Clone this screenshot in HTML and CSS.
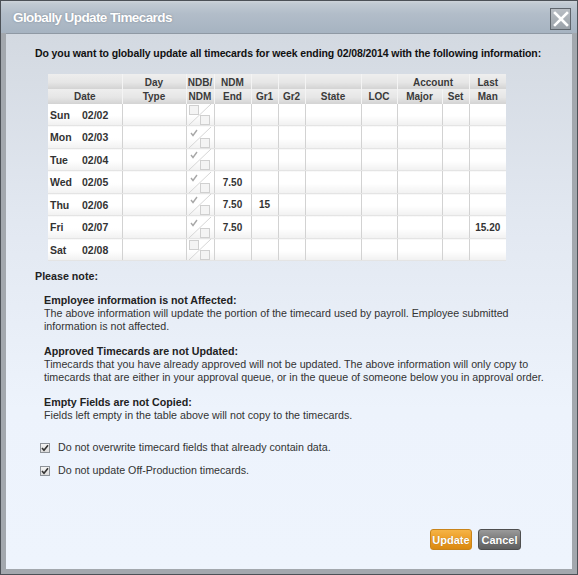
FILE: index.html
```html
<!DOCTYPE html>
<html>
<head>
<meta charset="utf-8">
<link rel="stylesheet" href="styles.css">
</head>
<body>
<div class="dialog">
  <div class="titlebar">
    <span class="title">Globally Update Timecards</span>
    <button class="close" aria-label="Close">
      <svg width="18" height="18" viewBox="0 0 18 18"><path d="M3 3 L15 15 M15 3 L3 15" stroke="#fff" stroke-width="2.6" stroke-linecap="square"/></svg>
    </button>
  </div>
  <div class="body">
    <p class="question">Do you want to globally update all timecards for week ending 02/08/2014 with the following information:</p>
    <table class="grid">
      <colgroup>
        <col class="c-date"><col class="c-type"><col class="c-ndb"><col class="c-end"><col class="c-gr"><col class="c-gr"><col class="c-state"><col class="c-loc"><col class="c-major"><col class="c-set"><col class="c-man">
      </colgroup>
      <thead>
        <tr class="h1">
          <th></th><th>Day</th><th>NDB/</th><th>NDM</th><th></th><th></th><th></th><th></th><th colspan="2" class="acct">Account</th><th>Last</th>
        </tr>
        <tr class="h2">
          <th>Date</th><th>Type</th><th>NDM</th><th>End</th><th>Gr1</th><th>Gr2</th><th>State</th><th>LOC</th><th>Major</th><th>Set</th><th>Man</th>
        </tr>
      </thead>
      <tbody>
        <tr><td class="date"><span class="dow">Sun</span><span>02/02</span></td><td></td><td class="ndb"><svg class="dual" width="28" height="21" viewBox="0 0 28 21"><line x1="2" y1="21" x2="24" y2="0" stroke="#d6d6d6"/><rect x="2.5" y="1.5" width="9" height="9" fill="#f4f4f4" stroke="#d0d0d0"/><rect x="13.5" y="11.5" width="9" height="9" fill="#f4f4f4" stroke="#d0d0d0"/></svg></td><td></td><td></td><td></td><td></td><td></td><td></td><td></td><td></td></tr>
        <tr><td class="date"><span class="dow">Mon</span><span>02/03</span></td><td></td><td class="ndb"><svg class="dual" width="28" height="21" viewBox="0 0 28 21"><line x1="2" y1="21" x2="24" y2="0" stroke="#d6d6d6"/><path d="M4 6 L6 8.5 L10 3" fill="none" stroke="#a8a8a8" stroke-width="1.4"/><rect x="13.5" y="11.5" width="9" height="9" fill="#f4f4f4" stroke="#d0d0d0"/></svg></td><td></td><td></td><td></td><td></td><td></td><td></td><td></td><td></td></tr>
        <tr><td class="date"><span class="dow">Tue</span><span>02/04</span></td><td></td><td class="ndb"><svg class="dual" width="28" height="21" viewBox="0 0 28 21"><line x1="2" y1="21" x2="24" y2="0" stroke="#d6d6d6"/><path d="M4 6 L6 8.5 L10 3" fill="none" stroke="#a8a8a8" stroke-width="1.4"/><rect x="13.5" y="11.5" width="9" height="9" fill="#f4f4f4" stroke="#d0d0d0"/></svg></td><td></td><td></td><td></td><td></td><td></td><td></td><td></td><td></td></tr>
        <tr><td class="date"><span class="dow">Wed</span><span>02/05</span></td><td></td><td class="ndb"><svg class="dual" width="28" height="21" viewBox="0 0 28 21"><line x1="2" y1="21" x2="24" y2="0" stroke="#d6d6d6"/><path d="M4 6 L6 8.5 L10 3" fill="none" stroke="#a8a8a8" stroke-width="1.4"/><rect x="13.5" y="11.5" width="9" height="9" fill="#f4f4f4" stroke="#d0d0d0"/></svg></td><td class="num">7.50</td><td></td><td></td><td></td><td></td><td></td><td></td><td></td></tr>
        <tr><td class="date"><span class="dow">Thu</span><span>02/06</span></td><td></td><td class="ndb"><svg class="dual" width="28" height="21" viewBox="0 0 28 21"><line x1="2" y1="21" x2="24" y2="0" stroke="#d6d6d6"/><path d="M4 6 L6 8.5 L10 3" fill="none" stroke="#a8a8a8" stroke-width="1.4"/><rect x="13.5" y="11.5" width="9" height="9" fill="#f4f4f4" stroke="#d0d0d0"/></svg></td><td class="num">7.50</td><td class="num">15</td><td></td><td></td><td></td><td></td><td></td><td></td></tr>
        <tr><td class="date"><span class="dow">Fri</span><span>02/07</span></td><td></td><td class="ndb"><svg class="dual" width="28" height="21" viewBox="0 0 28 21"><line x1="2" y1="21" x2="24" y2="0" stroke="#d6d6d6"/><path d="M4 6 L6 8.5 L10 3" fill="none" stroke="#a8a8a8" stroke-width="1.4"/><rect x="13.5" y="11.5" width="9" height="9" fill="#f4f4f4" stroke="#d0d0d0"/></svg></td><td class="num">7.50</td><td></td><td></td><td></td><td></td><td></td><td></td><td class="num">15.20</td></tr>
        <tr><td class="date"><span class="dow">Sat</span><span>02/08</span></td><td></td><td class="ndb"><svg class="dual" width="28" height="21" viewBox="0 0 28 21"><line x1="2" y1="21" x2="24" y2="0" stroke="#d6d6d6"/><rect x="2.5" y="1.5" width="9" height="9" fill="#f4f4f4" stroke="#d0d0d0"/><rect x="13.5" y="11.5" width="9" height="9" fill="#f4f4f4" stroke="#d0d0d0"/></svg></td><td></td><td></td><td></td><td></td><td></td><td></td><td></td><td></td></tr>
      </tbody>
    </table>

    <p class="note-title">Please note:</p>
    <div class="notes">
      <div class="note">
        <p class="note-head">Employee information is not Affected:</p>
        <p>The above information will update the portion of the timecard used by payroll. Employee submitted information is not affected.</p>
      </div>
      <div class="note">
        <p class="note-head">Approved Timecards are not Updated:</p>
        <p>Timecards that you have already approved will not be updated. The above information will only copy to timecards that are either in your approval queue, or in the queue of someone below you in approval order.</p>
      </div>
      <div class="note">
        <p class="note-head">Empty Fields are not Copied:</p>
        <p>Fields left empty in the table above will not copy to the timecards.</p>
      </div>
    </div>

    <div class="options">
      <label class="opt"><span class="cb"><svg width="8" height="8" viewBox="0 0 8 8"><path d="M1 4 L3 6.3 L7 1.2" fill="none" stroke="#333" stroke-width="1.6"/></svg></span>Do not overwrite timecard fields that already contain data.</label>
      <label class="opt"><span class="cb"><svg width="8" height="8" viewBox="0 0 8 8"><path d="M1 4 L3 6.3 L7 1.2" fill="none" stroke="#333" stroke-width="1.6"/></svg></span>Do not update Off-Production timecards.</label>
    </div>

    <div class="actions">
      <button class="btn btn-update">Update</button>
      <button class="btn btn-cancel">Cancel</button>
    </div>
  </div>
</div>
</body>
</html>
```

FILE: styles.css
```css
html, body {
  margin: 0;
  padding: 0;
}
body {
  width: 578px;
  height: 575px;
  overflow: hidden;
  font-family: "Liberation Sans", Arial, sans-serif;
  color: #222;
  background: #8e949a;
}
.dialog {
  box-sizing: border-box;
  width: 578px;
  height: 575px;
  display: flex;
  flex-direction: column;
  border: 1px solid #4c5157;
  background: #a3a8ae;
  padding: 0 5px 5px 5px;
}
.titlebar {
  height: 32px;
  margin: 0 -5px;
  padding: 0 6px 0 12px;
  display: flex;
  align-items: center;
  justify-content: space-between;
  background: linear-gradient(#cdd3d9 0, #c0c9d2 3px, #b2bdc9 40%, #a6b3c1 100%);
}
.title {
  color: #fff;
  font-weight: bold;
  font-size: 13.5px;
  letter-spacing: -0.6px;
  text-shadow: 0 0 2px rgba(80, 90, 100, 0.5);
  margin-top: 1px;
}
.close {
  width: 21px;
  height: 22px;
  padding: 0;
  margin-top: 4px;
  border: 1px solid #5f656c;
  background: linear-gradient(#b9bec4, #9aa1a8);
  display: flex;
  align-items: center;
  justify-content: center;
}
.body {
  flex: 1;
  display: flex;
  flex-direction: column;
  background: linear-gradient(#d3d9e1 0%, #e2e8f1 35%, #edf3fc 70%, #eef4fd 100%);
  border-top: 1px solid #8f99a4;
  padding: 0 0 0 29px;
  font-size: 10.7px;
}
.question {
  margin: 13px 0 0 0;
  font-weight: bold;
  font-size: 10.5px;
  letter-spacing: -0.1px;
  line-height: 13px;
  color: #111;
}
.grid {
  margin: 14px 0 0 13px;
  width: 458px;
  border-collapse: collapse;
  table-layout: fixed;
  font-size: 10px;
  font-weight: bold;
  color: #333;
}
.c-date { width: 74px; }
.c-type { width: 64px; }
.c-ndb { width: 28px; }
.c-end { width: 37px; }
.c-gr { width: 27px; }
.c-state { width: 56px; }
.c-loc { width: 36px; }
.c-major { width: 45px; }
.c-set { width: 27px; }
.c-man { width: 37px; }
.grid th {
  height: 15px;
  padding: 0;
  text-align: center;
  font-weight: bold;
  color: #3a3a3a;
  border-left: 1px solid #f4f4f4;
  line-height: 13px;
  background: linear-gradient(#eeeeee 0%, #e6e6e6 55%, #d3d3d3 100%);
}
.grid th:first-child { border-left: none; }
.grid .h1 th { vertical-align: bottom; }
.grid .h2 th { vertical-align: middle; }
.grid td {
  height: 21px;
  padding: 0;
  text-align: center;
  border-left: 1px solid #d2d2d2;
  border-bottom: 1px solid #e4e4e4;
  background: linear-gradient(#ffffff 0%, #ffffff 55%, #f1f1f1 100%);
  vertical-align: middle;
}
.grid tbody tr:nth-child(even) td { height: 22px; }
.grid td:first-child { border-left: none; }
.grid td.date {
  text-align: left;
  padding-left: 2px;
  font-size: 10.5px;
  color: #333;
}
.dow {
  display: inline-block;
  width: 32px;
}
.grid td.ndb {
  padding: 0;
  line-height: 0;
}
.dual { display: block; }
.grid td.num { font-size: 10px; color: #333; }
.note-title {
  margin: 9px 0 0 0;
  font-weight: bold;
  line-height: 13px;
  color: #222;
}
.notes {
  display: flex;
  flex-direction: column;
  gap: 12px;
  margin: 11px 0 0 9px;
}
.note p {
  margin: 0;
  line-height: 13px;
  color: #333;
  width: 505px;
}
.note p.note-head {
  font-weight: bold;
  color: #222;
}
.options {
  display: flex;
  flex-direction: column;
  gap: 10px;
  margin: 19px 0 0 5px;
}
.opt {
  display: flex;
  align-items: center;
  gap: 8px;
  line-height: 13px;
  color: #333;
}
.cb {
  box-sizing: border-box;
  width: 10px;
  height: 10px;
  border: 1px solid #8d9299;
  background: linear-gradient(#f4f4f4, #dcdcdc);
  display: flex;
  align-items: center;
  justify-content: center;
}
.actions {
  margin-top: auto;
  margin-bottom: 19px;
  margin-right: 51px;
  display: flex;
  justify-content: flex-end;
  gap: 6px;
}
.btn {
  height: 21px;
  padding: 0;
  font-family: "Liberation Sans", Arial, sans-serif;
  font-weight: bold;
  font-size: 11px;
  color: #fff;
  border-radius: 3px;
  text-align: center;
  text-shadow: 0 0 1px rgba(0, 0, 0, 0.3);
}
.btn-update {
  width: 42px;
  border: 1px solid #c9841a;
  background: linear-gradient(#f5b446 0%, #eb9a22 55%, #d98a12 100%);
}
.btn-cancel {
  width: 43px;
  border: 1px solid #4f4f4f;
  background: linear-gradient(#9a9a9a 0%, #777 55%, #5f5f5f 100%);
}
```
